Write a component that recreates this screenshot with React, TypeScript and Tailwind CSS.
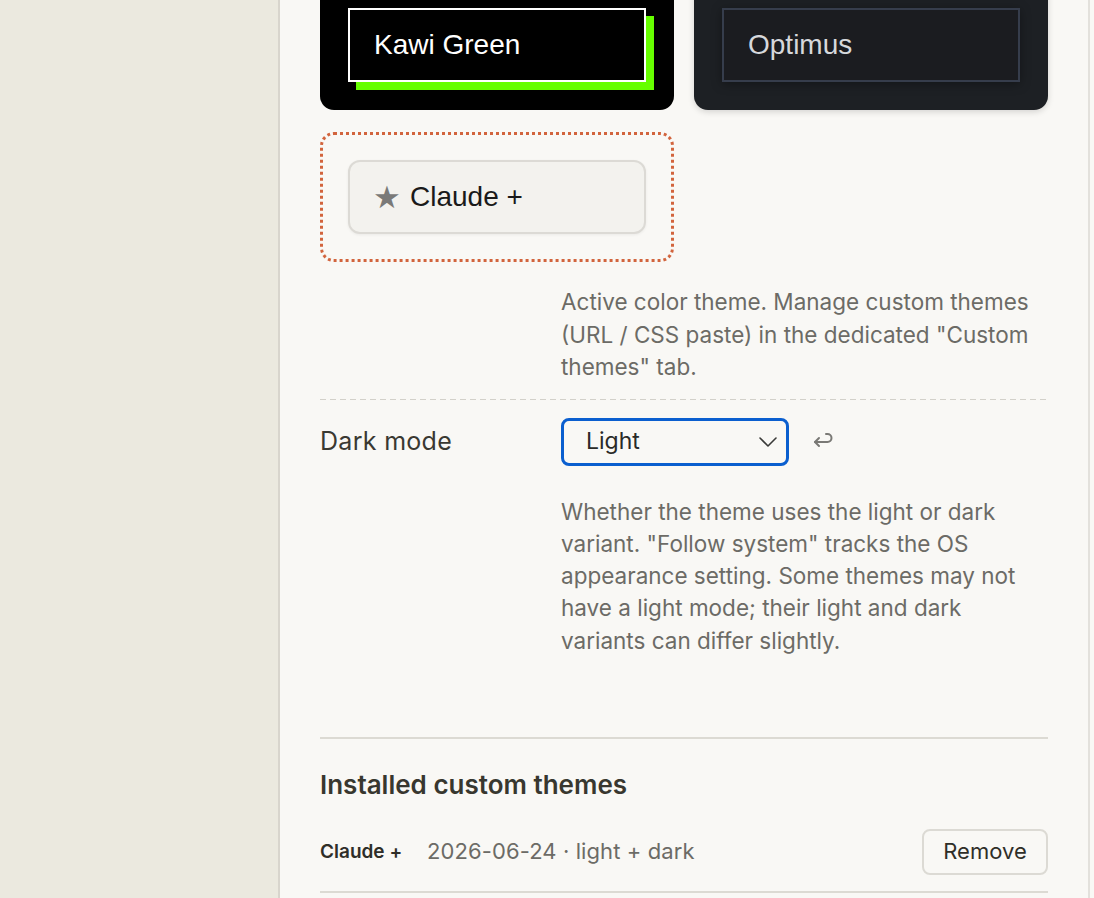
import React from "react";

const sans = { fontFamily: "Inter, 'Noto Sans', sans-serif" };
const helv = { fontFamily: "'Liberation Sans', Arial, sans-serif" };

function ThemeCard({
  outer,
  inner,
  children,
}: {
  outer: string;
  inner: string;
  children: React.ReactNode;
}) {
  return (
    <div className={`h-[130px] p-[28px] ${outer}`}>
      <div className={`h-[74px] flex items-center px-[24px] text-[28px] ${inner}`} style={helv}>
        {children}
      </div>
    </div>
  );
}

function ReturnIcon() {
  return (
    <svg width="22" height="18" viewBox="0 0 22 18" fill="none" stroke="#7a7975" strokeWidth="2" strokeLinecap="round" strokeLinejoin="round">
      <path d="M14 3h1.5a4 4 0 0 1 0 8H3" />
      <path d="M7 7l-4 4 4 4" />
    </svg>
  );
}

export default function App() {
  return (
    <div className="flex h-[898px] w-[1094px] overflow-hidden bg-[#f9f8f5]" style={sans}>
      <aside className="w-[280px] shrink-0 bg-[#ebe9df] border-r-2 border-[#d8d5cd]" />
      <main className="w-[810px] shrink-0 border-r-2 border-[#e3e1dc] bg-[#f9f8f5] px-[40px]">
        <div className="-mt-[20px]">
          {/* theme picker */}
          <div className="grid grid-cols-2 gap-x-[20px] gap-y-[22px]">
            <ThemeCard outer="bg-black rounded-[14px]" inner="bg-black border-2 border-white text-white shadow-[8px_8px_0_#66ff00]">
              Kawi Green
            </ThemeCard>
            <ThemeCard
              outer="bg-[#1d2024] rounded-[14px] shadow-[0_2px_6px_rgba(0,0,0,0.15)]"
              inner="bg-[#1b1c20] border-2 border-[#363d4c] text-[#d6d8dc] shadow-[0_2px_10px_rgba(0,0,0,0.35)]"
            >
              Optimus
            </ThemeCard>
            <div className="h-[130px] rounded-[14px] border-[3px] border-dotted border-[#d2643d] p-[25px]">
              <div
                className="h-[74px] flex items-center px-[24px] text-[28px] rounded-[12px] bg-[#f3f2ee] border-2 border-[#dcdad5] text-[#1a1a1a] shadow-[0_1px_3px_rgba(0,0,0,0.06)]"
                style={helv}
              >
                <span className="text-[#7a7a78] mr-[9px] -ml-[1px] text-[31px] leading-none">★</span>
                Claude +
              </div>
            </div>
          </div>

          <div className="grid grid-cols-[241px_1fr]">
            <div />
            <p className="mt-[24px] text-[22.5px] leading-[32.5px] text-[#6c6b66]">
              Active color theme. Manage custom themes (URL / CSS paste) in the dedicated "Custom themes" tab.
            </p>
          </div>

          <div className="mt-[15px] h-px bg-[repeating-linear-gradient(90deg,#d3d1ca_0_6px,transparent_6px_10px)]" />

          {/* dark mode */}
          <div className="grid grid-cols-[241px_1fr] pt-[18px]">
            <div className="h-[48px] flex items-center text-[25px] tracking-[0.3px] text-[#3a3932]">Dark mode</div>
            <div>
              <div className="flex items-center">
                <div className="w-[228px] h-[48px] rounded-[8px] border-[3px] border-[#0b5fcf] bg-[#f9f8f5] flex items-center justify-between pl-[22px] pr-[8px] text-[23px] text-[#2a2a28]">
                  <span>Light</span>
                  <svg width="20" height="12" viewBox="0 0 20 12" fill="none" stroke="#3a3a38" strokeWidth="1.6" strokeLinecap="round" strokeLinejoin="round">
                    <path d="M2 2l8 8 8-8" />
                  </svg>
                </div>
                <div className="ml-[23px] mb-[4px]">
                  <ReturnIcon />
                </div>
              </div>
              <p className="mt-[30px] text-[22.5px] leading-[32.3px] text-[#6c6b66]">
                Whether the theme uses the light or dark variant. "Follow system" tracks the OS appearance setting. Some themes may not have a light mode; their light and dark variants can differ slightly.
              </p>
            </div>
          </div>

          <div className="mt-[80px] border-t-2 border-[#dcdad3]" />

          {/* installed list */}
          <h2 className="mt-[30px] text-[26px] leading-[32px] font-semibold text-[#38372f]">Installed custom themes</h2>
          <div className="mt-[28px] flex items-center h-[46px]">
            <span className="text-[19px] font-semibold text-[#2f2e28] w-[107px]">Claude +</span>
            <span className="text-[22px] tracking-[0.1px] text-[#6c6b66]">2026-06-24 · light + dark</span>
            <button className="ml-auto h-[46px] w-[126px] rounded-[8px] border-2 border-[#dcdad4] bg-[#f9f8f5] text-[22px] text-[#2f2e28]">
              Remove
            </button>
          </div>
          <div className="mt-[16px] border-t-2 border-[#dcdad3]" />
        </div>
      </main>
    </div>
  );
}
